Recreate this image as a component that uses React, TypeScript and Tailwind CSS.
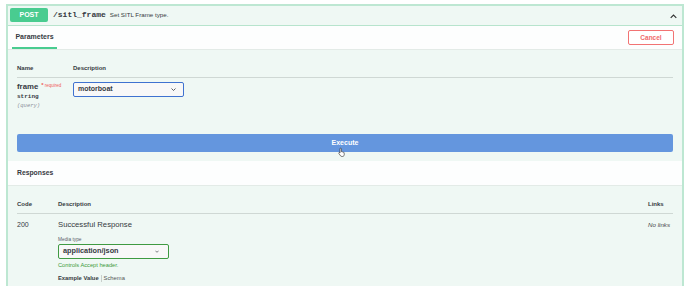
import React from "react";

const ChevronDown = ({ className = "" }: { className?: string }) => (
  <svg viewBox="0 0 10 6" className={className} fill="none" stroke="currentColor" strokeWidth="1.6">
    <path d="M1 1l4 4 4-4" />
  </svg>
);

const App = () => {
  return (
    <div
      className="w-[690px] h-[286px] overflow-hidden bg-white pt-[4px] pl-[6px] text-[#363a42]"
      style={{ fontFamily: '"Liberation Sans", Arial, sans-serif' }}
    >
      <div className="w-[678px] h-[300px] border-2 border-[#bde7d2] bg-[#eff8f4]">
        {/* Summary */}
        <div className="h-[20px] flex items-start pt-[2px] pl-[2px] pr-[5px] border-b border-[#b7e4cd]">
          <div className="w-[38px] h-[14px] rounded-[2px] bg-[#49cc90] text-white text-[7px] font-bold flex items-center justify-center">
            POST
          </div>
          <span className="ml-[5px] mt-[2px] text-[8px] leading-[10px] font-bold font-['Liberation_Mono',monospace]">
            /sitl_frame
          </span>
          <span className="ml-[4px] mt-[3px] text-[6.2px] leading-[8px]">Set SITL Frame type.</span>
          <svg viewBox="0 0 10 6" className="ml-auto mt-[6px] w-[7px] h-[5px]" fill="none" stroke="#303030" strokeWidth="1.6">
            <path d="M1 5l4-4 4 4" />
          </svg>
        </div>

        {/* Parameters header */}
        <div className="h-[24px] bg-white/90 flex items-stretch justify-between pl-[4px] pr-[8px] border-b border-[#e3ebe7]">
          <div className="w-[45px] flex items-center justify-center border-b-2 border-[#49cc90] pt-[2px] text-[7px] font-bold">
            Parameters
          </div>
          <div className="flex items-center">
            <button className="w-[46px] h-[15px] rounded-[2px] border border-[#f27373] text-[#f06a6a] text-[6.5px] font-bold bg-white">
              Cancel
            </button>
          </div>
        </div>

        {/* Parameters body */}
        <div className="px-[9px]">
          <div className="h-[28px] flex items-end pb-[5px] border-b border-[#cfd8d4] text-[6px] font-bold leading-[8px]">
            <div className="w-[56px]">Name</div>
            <div>Description</div>
          </div>
          <div className="h-[56px] flex pt-[4px]">
            <div className="w-[56px] flex flex-col">
              <div className="flex items-start">
                <span className="text-[7.8px] font-bold leading-[10px]">frame</span>
                <span className="ml-[3px] text-[#f05a5a] text-[4.5px] leading-[6px]">
                  <span className="text-[6px] font-bold">*</span> required
                </span>
              </div>
              <span className="text-[6px] leading-[9px] font-bold font-['Liberation_Mono',monospace]">
                string
              </span>
              <span className="text-[5.5px] leading-[9px] italic font-['Liberation_Mono',monospace] text-[#8a8f99]">
                (query)
              </span>
            </div>
            <div className="w-[111px] h-[15px] rounded-[2px] border-[1.5px] border-[#3f72d0] bg-[#f8f8f8] flex items-center justify-between pl-[4px] pr-[7px]">
              <span className="text-[7px] font-bold">motorboat</span>
              <ChevronDown className="w-[5px] h-[3px]" />
            </div>
          </div>
          <div className="relative h-[18px] rounded-[2px] bg-[#6496de] flex items-center justify-center text-white text-[7px] font-bold">
            Execute
            <svg viewBox="0 0 12 14" className="absolute left-[321px] top-[13px] w-[8px] h-[10px]">
              <path
                d="M4 1.2c.6 0 1 .4 1 1V6.5l.2-.1c.5-.3 1.1 0 1.3.4.5-.2 1.1 0 1.3.5.6-.2 1.2.2 1.3.8l.3 2.4c.1 1.6-.8 3-2.3 3.2H5.8c-.9 0-1.7-.5-2.2-1.2L1.3 9.2c-.3-.5-.2-1.1.3-1.4.4-.2.9-.1 1.2.2L3 8.4V2.2c0-.6.4-1 1-1z"
                fill="#fff"
                stroke="#222"
                strokeWidth="0.9"
              />
            </svg>
          </div>
          <div className="h-[9px]" />
        </div>

        {/* Responses header */}
        <div className="h-[25px] bg-white/90 flex items-center pl-[9px] border-b border-[#e3ebe7] text-[6.8px] font-bold">
          Responses
        </div>

        {/* Responses body */}
        <div className="px-[9px]">
          <div className="h-[28px] flex items-end pb-[5px] border-b border-[#cfd8d4] text-[6px] font-bold leading-[8px]">
            <div className="w-[41px]">Code</div>
            <div className="flex-1">Description</div>
            <div className="w-[25px]">Links</div>
          </div>
          <div className="flex">
            <div className="w-[41px] pt-[7px] text-[7px] leading-[8px]">200</div>
            <div className="flex-1 flex flex-col items-start pt-[6px]">
              <span className="text-[7.7px] leading-[10px]">Successful Response</span>
              <span className="mt-[7px] text-[4.8px] leading-[6px] text-[#5b606b]">Media type</span>
              <div className="mt-[1px] w-[111px] h-[15px] rounded-[2px] border-[1.5px] border-[#3f9a42] bg-[#f8f8f8] flex items-center justify-between pl-[4px] pr-[9px]">
                <span className="text-[7.3px] font-bold">application/json</span>
                <ChevronDown className="w-[4px] h-[3px]" />
              </div>
              <span className="mt-[3px] text-[5.7px] leading-[7px] text-[#3a9a3a]">Controls Accept header.</span>
              <div className="mt-[5px] flex items-center text-[5.8px] leading-[8px]">
                <span className="font-bold">Example Value</span>
                <span className="mx-[2px] w-px h-[7px] bg-[#c9cfcc]" />
                <span className="text-[#555]">Schema</span>
              </div>
            </div>
            <div className="w-[25px] pt-[7px] text-[6.2px] leading-[8px] italic text-[#444]">No links</div>
          </div>
        </div>
      </div>
    </div>
  );
};

export default App;
